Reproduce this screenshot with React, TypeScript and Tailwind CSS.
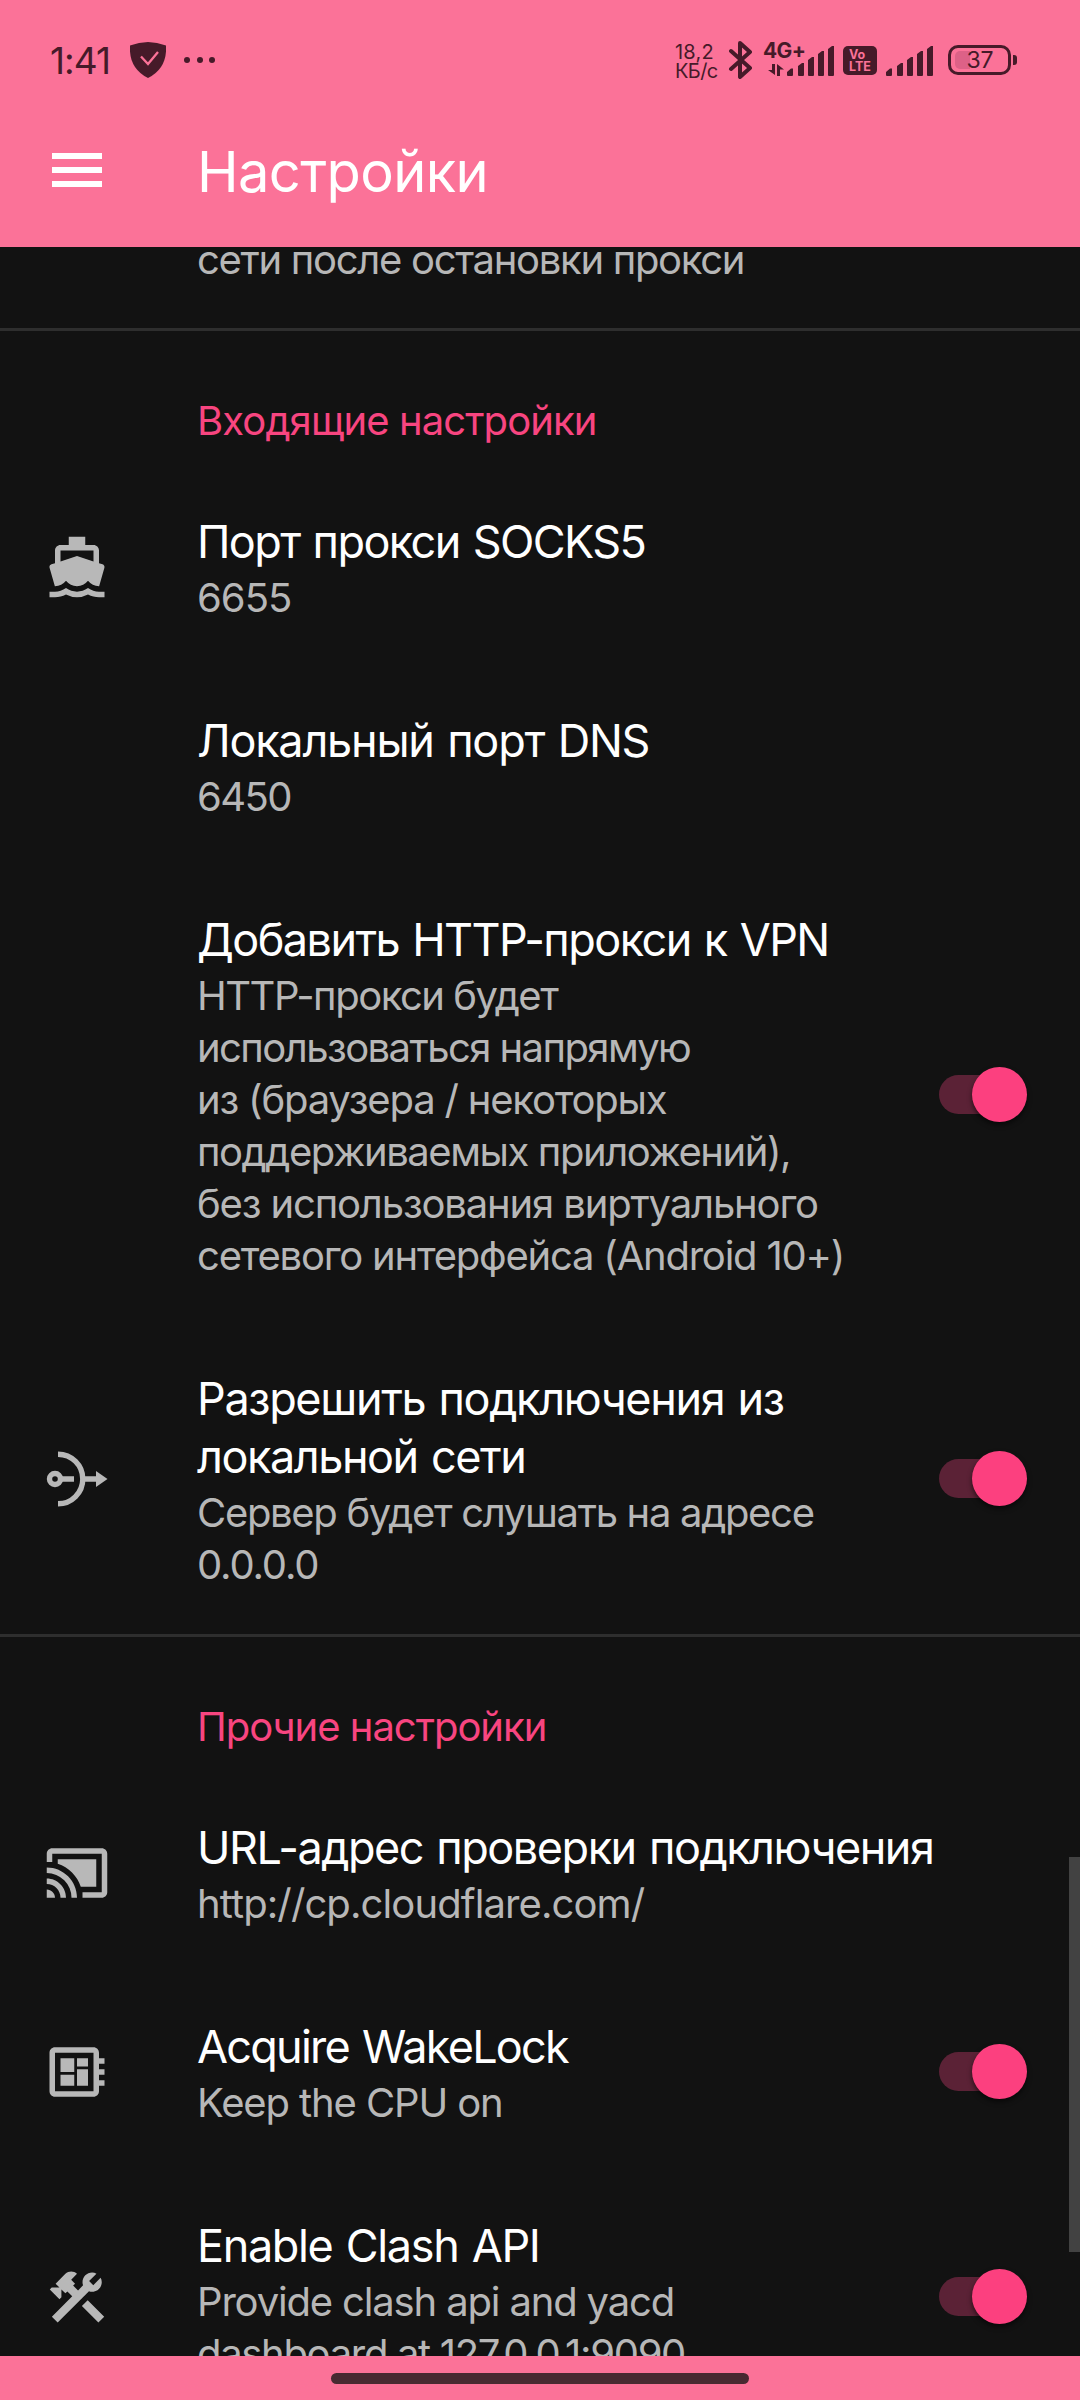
import React from "react";
import { MdCastConnected, MdDeveloperBoard, MdDirectionsBoat } from "react-icons/md";

type Line = { text: string; cls: string };

type Pref = {
  height: string;
  icon?: React.ReactNode;
  title: Line[];
  summary: Line[];
  toggle?: boolean;
};

function InboundIcon() {
  return (
    <svg viewBox="0 0 66 66" className="size-[66px]" fill="none" stroke="currentColor" strokeWidth="5.4">
      <circle cx="11" cy="33" r="5.5" />
      <path d="M17 33H30M14 8.2a24.8 24.8 0 0 1 0 49.6M40 33H53" />
      <path d="M52 25L63.500 33L52 41Z" fill="currentColor" stroke="none" />
    </svg>
  );
}

function HammerWrenchIcon() {
  return (
    <svg viewBox="0 0 24 24" className="size-[66px]" fill="currentColor">
      <path d="M13.78 15.3L19.78 21.3L21.89 19.14L15.89 13.14L13.78 15.3M17.5 10.1C17.11 10.1 16.69 10.05 16.36 9.91L4.97 21.25L2.86 19.14L10.27 11.74L8.5 9.96L7.78 10.66L6.33 9.25V12.11L5.63 12.81L2.11 9.25L2.81 8.55H5.62L4.22 7.14L7.78 3.58C8.95 2.41 10.83 2.41 12 3.58L9.89 5.74L11.3 7.14L10.59 7.85L12.38 9.63L14.2 7.75C14.06 7.42 14 7 14 6.63C14 4.66 15.56 3.11 17.5 3.11C18.09 3.11 18.61 3.25 19.08 3.53L16.41 6.2L17.91 7.7L20.58 5.03C20.86 5.5 21 6 21 6.63C21 8.55 19.45 10.1 17.5 10.1Z" />
    </svg>
  );
}

function Toggle() {
  return (
    <div className="relative h-[56px] w-[88px] shrink-0">
      <div className="absolute top-[8px] left-0 h-[39px] w-[83px] rounded-full bg-[#5b2236]" />
      <div className="absolute top-0 right-0 size-[55px] rounded-full bg-[#fc407f] shadow-[0_3px_5px_rgba(0,0,0,0.55)]" />
    </div>
  );
}

function Category({ line }: { line: Line }) {
  return (
    <div className="h-[136px] shrink-0 pt-[64px] pl-[197px]">
      <div className={"w-fit text-[40px] leading-[52px] whitespace-nowrap text-[#f84580] " + line.cls}>{line.text}</div>
    </div>
  );
}

function Row({ pref }: { pref: Pref }) {
  return (
    <div className={"flex shrink-0 items-center pr-[53px] " + pref.height}>
      <div className="flex w-[197px] shrink-0 pl-[44px] text-[#b8b8b8]">{pref.icon}</div>
      <div className="flex-1 self-start pt-[46px]">
        {pref.title.map((l) => (
          <div
            key={l.text}
            className={"w-fit text-[45px] leading-[58px] [word-spacing:2px] whitespace-nowrap text-white " + l.cls}
          >
            {l.text}
          </div>
        ))}
        <div className="mt-px">
          {pref.summary.map((l) => (
            <div key={l.text} className={"w-fit text-[40px] leading-[52px] whitespace-nowrap text-[#b7b7b7] " + l.cls}>
              {l.text}
            </div>
          ))}
        </div>
      </div>
      {pref.toggle && <Toggle />}
    </div>
  );
}

const inbound: Pref[] = [
  {
    height: "h-[199px]",
    icon: <MdDirectionsBoat size={66} />,
    title: [{ text: "Порт прокси SOCKS5", cls: "tracking-[-1.6px]" }],
    summary: [{ text: "6655", cls: "tracking-[-0.95px]" }],
  },
  {
    height: "h-[199px]",
    title: [{ text: "Локальный порт DNS", cls: "tracking-[-1.22px]" }],
    summary: [{ text: "6450", cls: "tracking-[-1.6px]" }],
  },
  {
    height: "h-[459px]",
    toggle: true,
    title: [{ text: "Добавить HTTP-прокси к VPN", cls: "tracking-[-1.56px]" }],
    summary: [
      { text: "HTTP-прокси будет", cls: "tracking-[-1.48px]" },
      { text: "использоваться напрямую", cls: "tracking-[-1.57px]" },
      { text: "из (браузера / некоторых", cls: "tracking-[-1.2px]" },
      { text: "поддерживаемых приложений),", cls: "tracking-[-1.44px]" },
      { text: "без использования виртуального", cls: "tracking-[-1.15px]" },
      { text: "сетевого интерфейса (Android 10+)", cls: "tracking-[-1.22px]" },
    ],
  },
  {
    height: "h-[310px]",
    icon: <InboundIcon />,
    toggle: true,
    title: [
      { text: "Разрешить подключения из", cls: "tracking-[-1.36px]" },
      { text: "локальной сети", cls: "tracking-[-1.44px]" },
    ],
    summary: [
      { text: "Сервер будет слушать на адресе", cls: "tracking-[-1.32px]" },
      { text: "0.0.0.0", cls: "tracking-[-1.15px]" },
    ],
  },
];

const misc: Pref[] = [
  {
    height: "h-[199px]",
    icon: <MdCastConnected size={66} />,
    title: [{ text: "URL-адрес проверки подключения", cls: "tracking-[-1.47px]" }],
    summary: [{ text: "http://cp.cloudflare.com/", cls: "tracking-[-0.9px]" }],
  },
  {
    height: "h-[199px]",
    icon: <MdDeveloperBoard size={66} />,
    toggle: true,
    title: [{ text: "Acquire WakeLock", cls: "tracking-[-1.75px]" }],
    summary: [{ text: "Keep the CPU on", cls: "tracking-[-1.12px]" }],
  },
  {
    height: "h-[252px]",
    icon: <HammerWrenchIcon />,
    toggle: true,
    title: [{ text: "Enable Clash API", cls: "tracking-[-1.35px]" }],
    summary: [
      { text: "Provide clash api and yacd", cls: "tracking-[-1.16px]" },
      { text: "dashboard at 127.0.0.1:9090", cls: "tracking-[-1.32px]" },
    ],
  },
];

function Signal({ className }: { className: string }) {
  return (
    <svg viewBox="0 0 48 31" className={"h-[31px] w-[48px] shrink-0 " + className} fill="currentColor">
      <path d="M0 26l4-3.500h2V29a1 1 0 0 1-1 1H1a1 1 0 0 1-1-1zM11 20l4-3h2v12a1 1 0 0 1-1 1h-4a1 1 0 0 1-1-1zM21 14l4-3h2v18a1 1 0 0 1-1 1h-4a1 1 0 0 1-1-1zM31 8l4-3h2v24a1 1 0 0 1-1 1h-4a1 1 0 0 1-1-1zM41 3l4-3h2v29a1 1 0 0 1-1 1h-4a1 1 0 0 1-1-1z" />
    </svg>
  );
}

function StatusBar() {
  return (
    <div className="flex h-[120px] items-start text-[#461a29]">
      <div className="mt-[38px] ml-[50px] w-[80px] text-[37px] leading-[46px] tracking-[-1px] whitespace-nowrap">1:41</div>
      <svg viewBox="0 0 36 36" className="mt-[42px] size-[36px] shrink-0">
        <path d="M0 3.500Q18-3.500 36 3.500Q37.500 26 18 36Q-1.500 26 0 3.500Z" fill="currentColor" />
        <path d="M11 14.500l7 7.500L28 10" fill="none" stroke="#fb7298" strokeWidth="2.300" />
      </svg>
      <div className="mt-[57px] ml-[18px] flex gap-[6.5px]">
        <span className="size-[6px] rounded-full bg-current" />
        <span className="size-[6px] rounded-full bg-current" />
        <span className="size-[6px] rounded-full bg-current" />
      </div>
      <div className="mt-[43px] ml-auto w-[53px] text-[20px] leading-[19px] whitespace-nowrap">
        <div className="w-fit tracking-[0.2px]">18,2</div>
        <div className="w-fit tracking-[-0.6px]">КБ/с</div>
      </div>
      <svg viewBox="0 0 26 38" className="mt-[41px] h-[38px] w-[26px] shrink-0" fill="none" stroke="currentColor" strokeWidth="4" strokeLinejoin="round" strokeLinecap="round">
        <path d="M3 10L22 27L12 36V2L22 11L3 28" />
      </svg>
      <div className="relative mt-[46px] ml-[33px] shrink-0">
        <div className="absolute top-[-7px] left-[-24px] text-[21px] leading-[24px] font-bold tracking-[-0.6px]">4G+</div>
        <svg viewBox="0 0 16 12" className="absolute top-[18px] left-[-19px] h-[12px] w-[16px]" fill="currentColor">
          <path d="M4 0h3v11L0 6h4zM9 12V0l7 5.500h-4V12z" />
        </svg>
        <Signal className="" />
      </div>
      <div className="mt-[46px] ml-[8px] flex h-[29px] w-[34px] shrink-0 flex-col items-start rounded-[5px] bg-current pt-[3px] pl-[6px] text-[12.5px] leading-[12px] font-bold">
        <span className="text-[#fb7298]">Vo</span>
        <span className="text-[#fb7298]">LTE</span>
      </div>
      <Signal className="mt-[46px] ml-[9px]" />
      <div className="relative mt-[45px] ml-[14px] flex h-[30px] w-[63px] shrink-0 items-center justify-center rounded-[10px] border-[3px] border-current">
        <div className="absolute top-[3px] left-[4px] h-[18px] w-[15px] rounded-l-[5px] bg-[#dd6187]" />
        <span className="relative ml-[1px] text-[23px] leading-[24px]">37</span>
      </div>
      <div className="mt-[55px] mr-[63px] ml-[2px] h-[10px] w-[4px] rounded-r-[3px] bg-current" />
    </div>
  );
}

export default function App() {
  return (
    <div className="flex h-[2400px] w-[1080px] flex-col overflow-hidden bg-[#121212] font-['Inter','Noto_Sans',sans-serif]">
      <header className="h-[247px] shrink-0 bg-[#fb7298]">
        <StatusBar />
        <div className="flex h-[100px] items-center">
          <div className="ml-[52px] flex w-[50px] flex-col gap-[8px]">
            <span className="h-[6px] bg-white" />
            <span className="h-[6px] bg-white" />
            <span className="h-[6px] bg-white" />
          </div>
          <h1 className="mt-[3px] ml-[95px] text-[56px] leading-[70px] tracking-[-0.6px] text-white">Настройки</h1>
        </div>
      </header>
      <main className="relative flex h-[2109px] shrink-0 flex-col overflow-hidden">
        <div className="h-[81px] shrink-0 pl-[197px]">
          <div className="mt-[-13px] w-fit text-[40px] leading-[52px] tracking-[-1.3px] whitespace-nowrap text-[#b7b7b7]">
            сети после остановки прокси
          </div>
        </div>
        <div className="h-[3px] shrink-0 bg-[#2e2e2e]" />
        <Category line={{ text: "Входящие настройки", cls: "tracking-[-0.9px]" }} />
        {inbound.map((p) => (
          <Row key={p.title[0].text} pref={p} />
        ))}
        <div className="h-[3px] shrink-0 bg-[#2e2e2e]" />
        <Category line={{ text: "Прочие настройки", cls: "tracking-[-1.02px]" }} />
        {misc.map((p) => (
          <Row key={p.title[0].text} pref={p} />
        ))}
        <div className="absolute top-[1610px] right-0 h-[395px] w-[11px] bg-[#424242]" />
      </main>
      <footer className="flex h-[44px] shrink-0 justify-center bg-[#fb7298] pt-[17px]">
        <div className="h-[11px] w-[418px] rounded-full bg-[#482931]" />
      </footer>
    </div>
  );
}
